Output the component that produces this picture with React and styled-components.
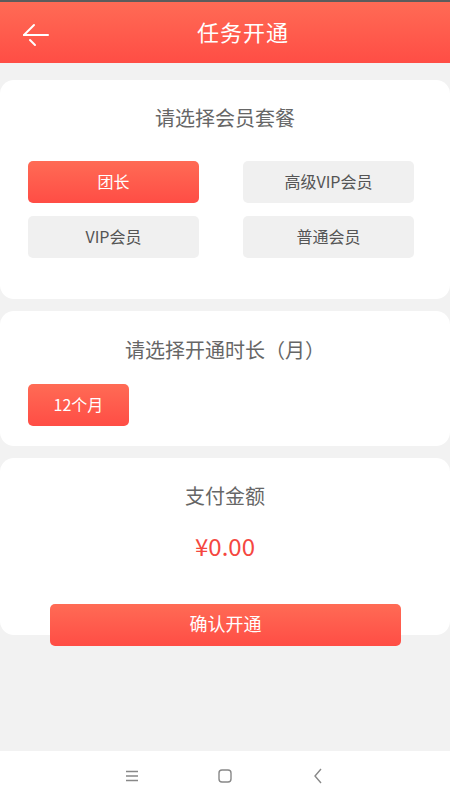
import React from "react";
import styled, { createGlobalStyle } from "styled-components";

const GlobalStyle = createGlobalStyle`
  html, body {
    margin: 0;
    padding: 0;
    background: #f2f2f2;
    font-family: "Noto Sans CJK SC", "Noto Sans", Roboto, sans-serif;
  }
`;

const Page = styled.div`
  width: 450px;
  height: 800px;
  display: flex;
  flex-direction: column;
  background: #f2f2f2;
  overflow: hidden;
`;

const Header = styled.header`
  height: 61px;
  border-top: 2px solid #5c5c5c;
  background: linear-gradient(180deg, #ff6b55 0%, #ff4d45 100%);
  display: flex;
  align-items: center;
  justify-content: center;
  position: relative;

  h1 {
    margin: 0 0 3px 36px;
    color: #fff;
    font-size: 22px;
    font-weight: 400;
    letter-spacing: 1px;
  }
`;

const Back = styled.button`
  position: absolute;
  left: 20px;
  top: 17px;
  width: 32px;
  height: 30px;
  border: 0;
  padding: 0;
  background: transparent;
`;

const Main = styled.main`
  flex: 1;
  display: flex;
  flex-direction: column;
  gap: 12px;
  padding-top: 17px;
`;

const Card = styled.section`
  background: #fff;
  border-radius: 14px;
  padding: ${(p) => p.$top}px 36px ${(p) => p.$bottom}px 28px;
  display: flex;
  flex-direction: column;
`;

const Title = styled.h3`
  margin: 0 0 ${(p) => p.$gap}px;
  font-size: 20px;
  line-height: 26px;
  font-weight: 400;
  color: #666;
  text-align: center;
  padding-left: 8px;
`;

const Grid = styled.div`
  display: grid;
  grid-template-columns: 171px 171px;
  column-gap: 44px;
  row-gap: 13px;
`;

const Option = styled.button`
  height: 42px;
  width: ${(p) => p.$width || "auto"};
  border: 0;
  border-radius: 5px;
  padding: 0 0 3px;
  font-family: inherit;
  font-size: 16px;
  color: ${(p) => (p.$active ? "#fff" : "#555")};
  background: ${(p) =>
    p.$active ? "linear-gradient(180deg, #ff6b55 0%, #ff4d45 100%)" : "#f0f0f0"};
`;

const Price = styled.div`
  text-align: center;
  color: #f5473f;
  font-size: 24px;
  line-height: 32px;
  padding-left: 8px;
  margin-bottom: 42px;
`;

const Confirm = styled.button`
  margin: 0 0 -11px 22px;
  width: 351px;
  height: 42px;
  border: 0;
  border-radius: 5px;
  padding: 0 0 4px;
  font-family: inherit;
  font-size: 18px;
  color: #fff;
  background: linear-gradient(180deg, #ff6b55 0%, #ff4d45 100%);
`;

const NavBar = styled.nav`
  height: 49px;
  background: #fff;
  display: flex;
  align-items: center;
  justify-content: center;

  span {
    width: 93px;
    display: flex;
    justify-content: center;
  }
`;

export default function App() {
  return (
    <Page>
      <GlobalStyle />
      <Header>
        <Back aria-label="返回">
          <svg width="32" height="30" viewBox="0 0 32 30" fill="none" stroke="#fff" strokeWidth="2" strokeLinecap="round">
            <path d="M4 16 H28" />
            <path d="M4 16 L14 6" />
            <path d="M10 21 L15 26" />
          </svg>
        </Back>
        <h1>任务开通</h1>
      </Header>
      <Main>
        <Card $top={25} $bottom={41}>
          <Title $gap={30}>请选择会员套餐</Title>
          <Grid>
            <Option $active>团长</Option>
            <Option>高级VIP会员</Option>
            <Option>VIP会员</Option>
            <Option>普通会员</Option>
          </Grid>
        </Card>
        <Card $top={26} $bottom={20}>
          <Title $gap={21}>请选择开通时长（月）</Title>
          <div>
            <Option $active $width="101px">12个月</Option>
          </div>
        </Card>
        <Card $top={25} $bottom={0}>
          <Title $gap={21}>支付金额</Title>
          <Price>¥0.00</Price>
          <Confirm>确认开通</Confirm>
        </Card>
      </Main>
      <NavBar>
        <span>
          <svg width="14" height="12" viewBox="0 0 14 12" stroke="#888" strokeWidth="1.3">
            <path d="M1 1.5 H13 M1 6 H13 M1 10.5 H13" />
          </svg>
        </span>
        <span>
          <svg width="14" height="14" viewBox="0 0 14 14" fill="none" stroke="#888" strokeWidth="1.4">
            <rect x="1" y="1" width="12" height="12" rx="3" />
          </svg>
        </span>
        <span>
          <svg width="10" height="16" viewBox="0 0 10 16" fill="none" stroke="#888" strokeWidth="1.4">
            <path d="M8 1 L2 8 L8 15" />
          </svg>
        </span>
      </NavBar>
    </Page>
  );
}
